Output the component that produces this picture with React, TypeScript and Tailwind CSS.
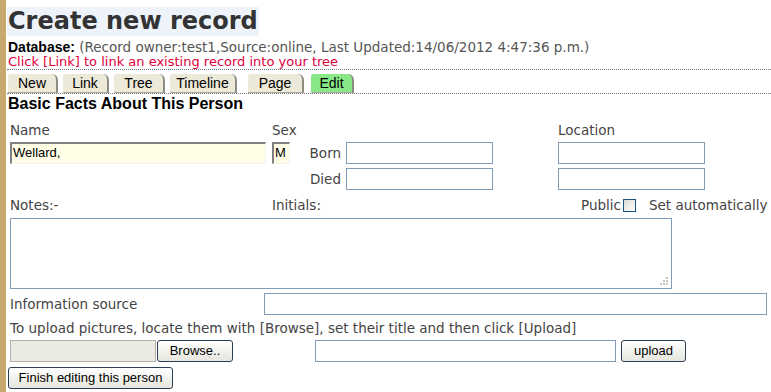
const V = { fontFamily: '"DejaVu Sans", Verdana, sans-serif' };
const A = { fontFamily: '"Liberation Sans", Arial, sans-serif' };

function Tab({ label, w, ml, green }: { label: string; w: number; ml: number; green?: boolean }) {
  return (
    <div
      className={`h-[19px] rounded-tr-[6px] rounded-tl-[3px] border-r-2 border-b border-r-[#8c8c80] border-b-[#a8a898] text-[14px] leading-[19px] text-center text-black ${green ? "bg-[#88e888]" : "bg-[#ece9d8]"}`}
      style={{ ...A, width: w, marginLeft: ml }}
    >
      {label}
    </div>
  );
}

function Btn({ label, w }: { label: string; w: number }) {
  return (
    <div
      className="h-[22px] rounded-[3px] border border-[#2d3d55] bg-gradient-to-b from-white to-[#e6e6de] text-[13px] leading-[20px] text-center text-black"
      style={{ ...A, width: w }}
    >
      {label}
    </div>
  );
}

function Box({ w }: { w: number }) {
  return <div className="h-[22px] border border-[#7f9db9] bg-white" style={{ width: w }} />;
}

export default function App() {
  return (
    <div className="flex min-h-[392px] bg-white">
      <div className="w-[6px] shrink-0 bg-[#c8a86f]" />
      <div className="flex-1 pl-[1px]">
        <div className="mt-[7px] inline-block h-[29px] bg-[#eef3fa] px-[1px] text-[24px] font-bold leading-[29px] text-[#333]" style={V}>
          Create new record
        </div>
        <div className="pl-[1px] mt-[4px] h-[15px] whitespace-nowrap text-[13.5px] leading-[15px] text-[#555]" style={V}>
          <span className="text-[14px] font-bold text-black" style={A}>Database:</span>{" "}
          (Record owner:test1,Source:online, Last Updated:14/06/2012 4:47:36 p.m.)
        </div>
        <div className="pl-[1px] h-[14px] whitespace-nowrap text-[13px] leading-[14px] text-[#e0003c]" style={V}>
          Click [Link] to link an existing record into your tree
        </div>
        <div className="border-t border-dotted border-[#777]" />
        <div className="flex pl-[1px] pt-[4px] border-b border-dotted border-[#777]">
          <Tab label="New" w={50} ml={0} />
          <Tab label="Link" w={46} ml={5} />
          <Tab label="Tree" w={51} ml={5} />
          <Tab label="Timeline" w={67} ml={5} />
          <Tab label="Page" w={56} ml={11} />
          <Tab label="Edit" w={43} ml={7} green />
        </div>
        <div className="pl-[1px] mt-[1px] h-[18px] text-[16px] font-bold leading-[18px] text-black" style={A}>
          Basic Facts About This Person
        </div>

        <div className="pl-[3px] text-[13.5px] text-[#444]" style={V}>
          <div
            className="mt-[9px] grid gap-y-[4px]"
            style={{ gridTemplateColumns: "262px 18px 56px 147px 65px 147px", gridTemplateRows: "16px 22px 22px" }}
          >
            <div className="leading-[16px]">Name</div>
            <div className="col-span-4 leading-[16px]">Sex</div>
            <div className="leading-[16px]">Location</div>

            <div className="h-[22px] w-[256px] border-t-2 border-l-2 border-r border-b border-t-[#808080] border-l-[#808080] border-r-[#f4f4ee] border-b-[#f4f4ee] bg-[#fffde6] pl-[1px] text-[13px] leading-[18px] text-black" style={A}>
              Wellard,
            </div>
            <div className="h-[22px] w-[18px] border-t-2 border-l-2 border-r border-b border-t-[#808080] border-l-[#808080] border-r-[#f4f4ee] border-b-[#f4f4ee] bg-[#fffde6] pl-[1px] text-[13px] leading-[18px] text-black" style={A}>
              M
            </div>
            <div className="pr-[5px] text-right leading-[22px]">Born</div>
            <Box w={147} />
            <div />
            <Box w={147} />

            <div />
            <div />
            <div className="pr-[5px] text-right leading-[22px]">Died</div>
            <Box w={147} />
            <div />
            <Box w={147} />
          </div>

          <div className="mt-[5px] flex h-[20px] items-center leading-[20px]">
            <div className="w-[262px]">Notes:-</div>
            <div className="w-[309px]">Initials:</div>
            <div className="flex items-center whitespace-nowrap">
              <span>Public</span>
              <span className="ml-[2px] inline-block h-[13px] w-[13px] border border-[#1c5180] bg-gradient-to-br from-[#dcdcd6] to-white" />
              <span className="ml-[13px]">Set automatically</span>
            </div>
          </div>

          <div className="relative mt-[3px] h-[71px] w-[662px] border border-[#7f9db9] bg-white">
            <svg className="absolute bottom-[2px] right-[2px]" width="10" height="10" viewBox="0 0 10 10">
              <rect x="7" y="1" width="2" height="2" fill="#c8c8c0" />
              <rect x="4" y="4" width="2" height="2" fill="#c8c8c0" />
              <rect x="7" y="4" width="2" height="2" fill="#c8c8c0" />
              <rect x="1" y="7" width="2" height="2" fill="#c8c8c0" />
              <rect x="4" y="7" width="2" height="2" fill="#c8c8c0" />
              <rect x="7" y="7" width="2" height="2" fill="#c8c8c0" />
            </svg>
          </div>

          <div className="mt-[4px] flex h-[22px] items-center">
            <div className="w-[254px]">Information source</div>
            <Box w={503} />
          </div>

          <div className="mt-[3px] h-[20px] whitespace-nowrap leading-[20px]">
            To upload pictures, locate them with [Browse], set their title and then click [Upload]
          </div>

          <div className="mt-[2px] flex h-[22px] items-center">
            <div className="h-[22px] w-[146px] border border-[#b0b0a8] bg-[#ebebe4]" />
            <div className="ml-[1px]"><Btn label="Browse.." w={76} /></div>
            <div className="ml-[82px]"><Box w={301} /></div>
            <div className="ml-[5px]"><Btn label="upload" w={65} /></div>
          </div>
        </div>
        <div className="mt-[5px] pl-[1px]">
          <Btn label="Finish editing this person" w={165} />
        </div>
      </div>
    </div>
  );
}
